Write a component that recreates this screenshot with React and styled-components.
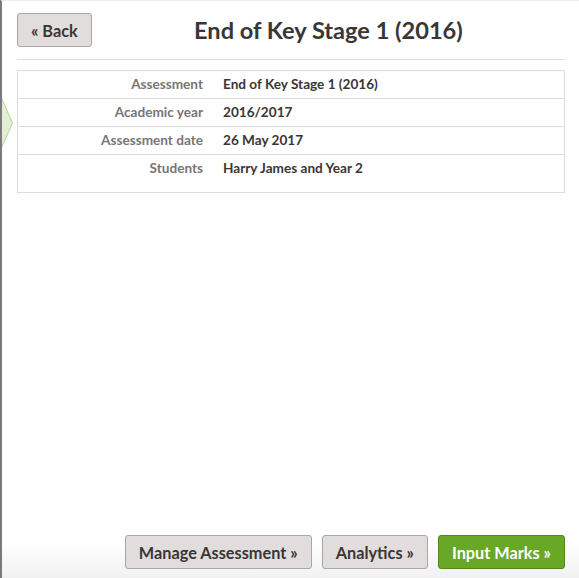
import styled, { createGlobalStyle } from "styled-components";

const GlobalStyle = createGlobalStyle`
    html, body {
        margin: 0;
        padding: 0;
        background: #fff;
    }

    body {
        font-family: Lato, "Open Sans", sans-serif;
        color: #333;
    }
`;

const Page = styled.div`
    position: relative;
    box-sizing: border-box;
    height: 578px;
    display: flex;
    flex-direction: column;
    border-top: 1px solid #ececec;
    border-left: 2px solid #7a7a7a;
    overflow: hidden;
`;

const Chevron = styled.svg`
    position: absolute;
    left: 0;
    top: 96px;
`;

const Content = styled.div`
    padding: 12px 14px 0 15px;
`;

const Header = styled.div`
    display: flex;
    align-items: center;
    padding-bottom: 12px;
    border-bottom: 1px solid #dcdcdc;
`;

const Button = styled.button`
    box-sizing: border-box;
    height: 34px;
    padding: 0 13px;
    font-family: inherit;
    font-size: 16.3px;
    font-weight: 700;
    color: ${(p) => (p.$primary ? "#fff" : "#3a3636")};
    background: ${(p) => (p.$primary ? "#69a827" : "#e1dddd")};
    border: 1px solid ${(p) => (p.$primary ? "#508a1c" : "#aaa6a6")};
    border-radius: 3px;
    cursor: pointer;
    white-space: nowrap;
`;

const Title = styled.h1`
    flex: 1;
    margin: 0;
    text-align: center;
    font-size: 23.6px;
    font-weight: 700;
    color: #3a3636;
`;

const Details = styled.div`
    margin-top: 10px;
    border: 1px solid #dcdcdc;
    padding-bottom: 10px;
`;

const Row = styled.div`
    display: grid;
    grid-template-columns: 185px 1fr;
    column-gap: 20px;
    align-items: center;
    height: 27px;
    border-top: ${(p) => (p.$first ? "none" : "1px solid #dcdcdc")};
    font-size: 13.6px;
    font-weight: 700;
    line-height: 1;
`;

const Label = styled.div`
    text-align: right;
    color: #7a7575;
`;

const Value = styled.div`
    color: #3a3636;
`;

const Footer = styled.div`
    margin-top: auto;
    display: flex;
    justify-content: flex-end;
    gap: 10px;
    padding: 10px 14px 9px 0;
    background: linear-gradient(to bottom, #fff 0%, #fff 30%, #f1f1f1 100%);
`;

const rows = [
    ["Assessment", "End of Key Stage 1 (2016)"],
    ["Academic year", "2016/2017"],
    ["Assessment date", "26 May 2017"],
    ["Students", "Harry James and Year 2"],
];

export default function App() {
    return (
        <>
            <GlobalStyle />
            <Page>
                <Chevron width="12" height="52" viewBox="0 0 12 52">
                    <path d="M-1 0 L10.5 26 L-1 52 Z" fill="#e2eed6" stroke="#b4d596" strokeWidth="1" />
                </Chevron>

                <Content>
                    <Header>
                        <Button>« Back</Button>
                        <Title>End of Key Stage 1 (2016)</Title>
                    </Header>

                    <Details>
                        {rows.map(([label, value], i) => (
                            <Row key={label} $first={i === 0}>
                                <Label>{label}</Label>
                                <Value>{value}</Value>
                            </Row>
                        ))}
                    </Details>
                </Content>

                <Footer>
                    <Button>Manage Assessment »</Button>
                    <Button>Analytics »</Button>
                    <Button $primary>Input Marks »</Button>
                </Footer>
            </Page>
        </>
    );
}
